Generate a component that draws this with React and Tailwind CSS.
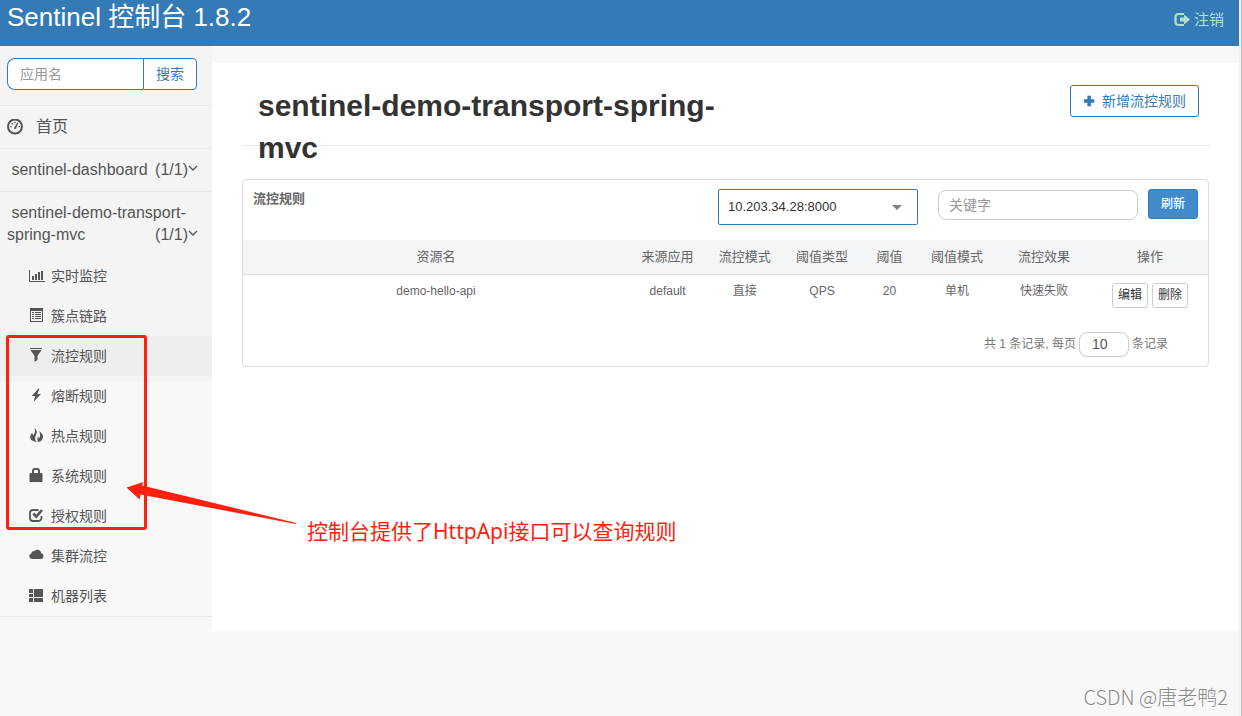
import { useState } from 'react';

const Icon = ({ children, size = 'size-4', viewBox = '0 0 16 16' }) => (
    <svg className={`${size} shrink-0`} viewBox={viewBox} fill="currentColor" aria-hidden="true">
        {children}
    </svg>
);

const icons = {
    dashboard: (
        <>
            <circle cx="8" cy="7.5" r="7" fill="none" stroke="currentColor" strokeWidth="2" />
            <path d="M7 9 10.500 3.300l.9.500L9 9.700a1.200 1.200 0 0 1-2-.7z" />
            <path d="M3.200 7h1.400v1.200H3.200zM4.600 4.100h1.300v1.300H4.600zM7.300 2.700h1.300V4H7.300zM11.600 7H13v1.200h-1.400z" />
        </>
    ),
    chart: (
        <>
            <path d="M0 2h1v11h15v1H0z" />
            <path d="M3 8h2v4H3zM6 6h2v6H6zM9 4h2v8H9zM12 3h2v9h-2z" />
        </>
    ),
    list: (
        <>
            <path fillRule="evenodd" d="M1 0h13v14H1zM2 3v10h11V3z" />
            <path d="M3 4h2v1H3zM3 6h2v1H3zM3 8h2v1H3zM3 10h2v1H3zM6 4h6v1H6zM6 6h6v1H6zM6 8h6v1H6zM6 10h6v1H6z" />
        </>
    ),
    filter: <path d="M1 0h12v1H1zM1.500 2h11L8.500 8v4L5.500 14V8z" />,
    flash: <path d="M9.500.5 2.700 8h3.600L4.500 14 12 6H8.300l2.200-5.300z" />,
    fire: (
        <>
            <path d="M5.500 0C8 2.200 8.300 4.500 7.200 6.600 6 9 5.500 11.500 7.500 14 3.500 13.500 1 11.500 1.200 8.500c.1-1.700 1.200-2.500 1.900-3.800C3.800 5.700 4 6.500 4 7.500c2-2 2.400-4.500 1.500-7.500z" />
            <path d="M10 3c2.300 1.300 4 3.600 4 6 0 2.700-1.800 4.500-5 5C8 11.500 8.200 10 9.200 8.200c.4.900.6 1.600.8 2.500C11.600 8.400 11.300 5.700 10 3z" />
        </>
    ),
    lock: <path fillRule="evenodd" d="M3 5V3a3 3 0 0 1 3-3h2a3 3 0 0 1 3 3v2h1.500a1 1 0 0 1 1 1v8H.500V6a1 1 0 0 1 1-1zm2 0h4V3a1 1 0 0 0-1-1H6a1 1 0 0 0-1 1z" />,
    check: (
        <>
            <path d="M9.500 2H4A3 3 0 0 0 1 5v5a3 3 0 0 0 3 3h5.500a3 3 0 0 0 3-3V8" fill="none" stroke="currentColor" strokeWidth="1.800" />
            <path d="m4.300 5.500 3 3L13 2" fill="none" stroke="currentColor" strokeWidth="2.600" />
        </>
    ),
    cloud: <path d="M3 11a2.800 2.800 0 0 1-.7-5.500A2.300 2.300 0 0 1 5 3.300a4.100 4.100 0 0 1 7.300 2A2.900 2.900 0 0 1 12 11z" />,
    machines: <path d="M0 1h4v4H0zM5 1h9v8H5zM0 6h4v3H0zM0 10h4v4H0zM5 10h9v4H5z" />,
    logout: (
        <>
            <path d="M10 2H4.500A3 3 0 0 0 1.500 5v5a3 3 0 0 0 3 3H10" fill="none" stroke="currentColor" strokeWidth="2.200" />
            <path d="M6 5.500h4V2.500l6 5-6 5v-3H6z" />
        </>
    ),
    plus: <path d="M5 1h4v4h4v4H9v4H5V9H1V5h4z" />,
};

const menu = [
    { name: '实时监控', icon: 'chart' },
    { name: '簇点链路', icon: 'list' },
    { name: '流控规则', icon: 'filter' },
    { name: '熔断规则', icon: 'flash' },
    { name: '热点规则', icon: 'fire' },
    { name: '系统规则', icon: 'lock' },
    { name: '授权规则', icon: 'check' },
    { name: '集群流控', icon: 'cloud' },
    { name: '机器列表', icon: 'machines' },
];

const columns = [
    { name: '资源名', width: 'w-[40%]' },
    { name: '来源应用', width: 'w-[8%]' },
    { name: '流控模式', width: 'w-[8%]' },
    { name: '阈值类型', width: 'w-[8%]' },
    { name: '阈值', width: 'w-[6%]' },
    { name: '阈值模式', width: 'w-[8%]' },
    { name: '流控效果', width: 'w-[10%]' },
    { name: '操作', width: 'w-[12%]' },
];

const rules = [
    ['demo-hello-api', 'default', '直接', 'QPS', '20', '单机', '快速失败'],
];

function AppLink({ name, count }) {
    return (
        <a href="#" className="block py-[10px] pl-[7px] pr-[14px] text-base leading-[22px]">
            &nbsp;{name}
            <span className="float-right flex items-center">
                {count}
                <svg className="w-[10px] h-[6px] mb-1" viewBox="0 0 10 6" fill="none" stroke="currentColor" strokeWidth="1.3" aria-hidden="true">
                    <path d="m1 1 4 4 4-4" />
                </svg>
            </span>
        </a>
    );
}

function Sidebar({ active, onSelect }) {
    const [keyword, setKeyword] = useState('');

    return (
        <aside className="w-[212px] shrink-0 text-[#555] bg-linear-to-b from-[#f4f4f4] from-[336px] to-[#f8f8f8] to-[336px]">
            <form className="flex h-[59px] pt-3 pl-[7px] pr-[15px]" onSubmit={(e) => e.preventDefault()}>
                <input
                    type="text"
                    aria-label="应用名"
                    placeholder="应用名"
                    value={keyword}
                    onChange={(e) => setKeyword(e.target.value)}
                    className="h-8 min-w-0 flex-1 rounded-l-lg border border-r-0 border-[#337ab7] bg-white px-3 text-sm placeholder:text-[#999] outline-none"
                />
                <button type="submit" className="h-8 w-[54px] rounded-r border border-[#337ab7] bg-white text-sm text-[#337ab7]">
                    搜索
                </button>
            </form>
            <nav className="border-b border-[#e7e7e7]">
                <div className="border-t border-[#e7e7e7]">
                    <a href="#" className="flex h-[42px] items-center gap-[13px] px-[7px] text-base">
                        <Icon>{icons.dashboard}</Icon>
                        首页
                    </a>
                </div>
                <div className="border-t border-[#e7e7e7]">
                    <AppLink name="sentinel-dashboard" count="(1/1)" />
                </div>
                <div className="border-t border-[#e7e7e7]">
                    <div className="h-16">
                        <AppLink name="sentinel-demo-transport-spring-mvc" count="(1/1)" />
                    </div>
                    <ul>
                        {menu.map((item) => (
                            <li key={item.name}>
                                <a
                                    href="#"
                                    onClick={() => onSelect(item.name)}
                                    className={`flex h-10 items-center gap-[6px] pl-[29px] text-sm ${active === item.name ? 'bg-[#eee]' : ''}`}
                                >
                                    <Icon>{icons[item.icon]}</Icon>
                                    {item.name}
                                </a>
                            </li>
                        ))}
                    </ul>
                </div>
            </nav>
        </aside>
    );
}

function RulePanel() {
    const [search, setSearch] = useState('');
    const [pageSize, setPageSize] = useState('10');

    return (
        <section className="mt-[33px] rounded border border-[#ddd] text-[#666]">
            <div className="flex h-[60px] items-start pt-[9px] px-[10px]">
                <h2 className="flex-1 text-[13px] leading-5 font-bold">流控规则</h2>
                <div className="relative mr-5">
                    <select
                        aria-label="机器"
                        className="h-9 w-[200px] appearance-none rounded-xs border border-[#337ab7] bg-white px-[9px] text-[13px] text-[#333] outline-none"
                    >
                        <option>10.203.34.28:8000</option>
                    </select>
                    <svg className="pointer-events-none absolute top-4 right-4 h-[5px] w-[10px]" viewBox="0 0 10 5" fill="#808080" aria-hidden="true">
                        <path d="M0 0h10L5 5z" />
                    </svg>
                </div>
                <input
                    type="text"
                    aria-label="关键字"
                    placeholder="关键字"
                    value={search}
                    onChange={(e) => setSearch(e.target.value)}
                    className="mr-[10px] mt-px h-[30px] w-[200px] rounded-lg border border-[#ccc] px-[10px] text-sm placeholder:text-[#999] outline-none"
                />
                <button type="button" className="h-[30px] w-[50px] rounded-[3px] border border-[#357ebd] bg-[#428bca] text-xs font-medium text-white">
                    刷新
                </button>
            </div>
            <table className="w-full table-fixed text-center">
                <thead>
                    <tr className="h-[34px] border-b border-[#ddd] bg-[#f3f5f7] text-[13px]">
                        {columns.map((col) => (
                            <th key={col.name} className={`${col.width} font-normal`}>{col.name}</th>
                        ))}
                    </tr>
                </thead>
                <tbody>
                    {rules.map((rule) => (
                        <tr key={rule[0]} className="align-top text-xs">
                            {rule.map((value) => (
                                <td key={value} className="pt-2">{value}</td>
                            ))}
                            <td className="pt-2">
                                <div className="flex justify-center gap-1">
                                    <button type="button" className="h-[25px] w-9 rounded-[3px] border border-[#ccc] bg-white text-[#333]">编辑</button>
                                    <button type="button" className="h-[25px] w-9 rounded-[3px] border border-[#ccc] bg-white text-[#333]">删除</button>
                                </div>
                            </td>
                        </tr>
                    ))}
                </tbody>
            </table>
            <div className="flex items-center justify-end pt-6 pr-10 pb-[9px] text-xs text-[#777]">
                <label htmlFor="pageSize">共 1 条记录, 每页</label>
                <input
                    id="pageSize"
                    type="text"
                    value={pageSize}
                    onChange={(e) => setPageSize(e.target.value)}
                    className="mx-[3px] h-[25px] w-[50px] rounded-lg border border-[#ccc] px-3 text-sm text-[#555] outline-none"
                />
                <span>条记录</span>
            </div>
        </section>
    );
}

// red frame, arrow and caption drawn over the page
function Annotation() {
    return (
        <>
            <div className="pointer-events-none absolute top-[335px] left-[6px] h-[195px] w-[141px] rounded-[3px] border-3 border-[#ff2010]" />
            <svg className="pointer-events-none absolute top-[480px] left-[124px] h-[46px] w-[175px]" viewBox="0 0 175 46" fill="#ff2010" aria-hidden="true">
                <path d="M2.500 7.500 19.500 2 18 5.500 172 43 171.500 44 16.500 14.500 15.500 19.500z" />
            </svg>
            <p className="absolute top-[515px] left-[307px] text-[21px] leading-8 whitespace-nowrap text-[#ff2010] font-['Noto_Sans','Noto_Sans_CJK_SC',sans-serif]">
                控制台提供了HttpApi接口可以查询规则
            </p>
            <p className="absolute top-[682px] right-[14px] text-xl leading-[30px] font-light whitespace-nowrap text-[#888] [text-shadow:1px_1px_0_#fff] font-['Noto_Sans_CJK_SC',sans-serif]">
                CSDN @唐老鸭2
            </p>
        </>
    );
}

export default function App() {
    const [active, setActive] = useState('流控规则');

    return (
        <div className="relative flex min-h-screen bg-[#f8f8f8] font-['Liberation_Sans','Noto_Sans_CJK_SC',sans-serif]">
            <div className="flex min-w-0 flex-1 flex-col">
                <header className="flex h-[46px] items-start justify-between bg-[#337ab7] pl-[7px] pr-[15px]">
                    <h1 className="text-[26px] leading-[34px] text-white">Sentinel 控制台 1.8.2</h1>
                    <a href="#" className="flex h-10 items-center gap-1 text-[15px] text-[#b2dfd4]">
                        <Icon>{icons.logout}</Icon>
                        注销
                    </a>
                </header>
                <div className="flex items-start">
                    <Sidebar active={active} onSelect={setActive} />
                    <main className="mt-[17px] min-h-[568px] min-w-0 flex-1 bg-white px-[30px]">
                        <div className="flex h-[83px] items-start justify-between border-b border-[#e7e7e7] pt-[22px] pl-4 pr-[10px]">
                            <h1 className="w-1/2 text-[30px] leading-[42px] font-bold text-[#333]">sentinel-demo-transport-spring-mvc</h1>
                            <button type="button" className="flex h-8 items-center gap-[5px] rounded-[3px] border border-[#337ab7] bg-white px-3 text-sm text-[#337ab7]">
                                <Icon size="size-[14px]" viewBox="0 0 16 14">{icons.plus}</Icon>
                                新增流控规则
                            </button>
                        </div>
                        <RulePanel />
                    </main>
                </div>
            </div>
            <div className="w-[3px] border-r border-[#c1c1c1] bg-[#f1f1f1]" />
            <Annotation />
        </div>
    );
}
